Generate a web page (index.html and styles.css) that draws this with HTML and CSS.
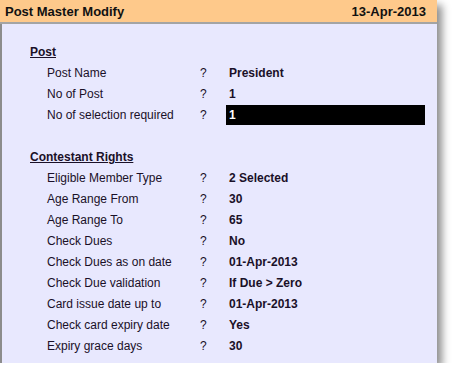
FILE: index.html
```html
<!DOCTYPE html>
<html lang="en">
<head>
  <meta charset="UTF-8">
  <title>Post Master Modify</title>
  <link rel="stylesheet" href="styles.css">
</head>
<body>
  <div class="panel">
    <div class="titlebar">
      <span>Post Master Modify</span>
      <span>13-Apr-2013</span>
    </div>
    <div class="content">
      <div class="heading">Post</div>
      <div class="row"><span class="label">Post Name</span><span class="q">?</span><span class="value">President</span></div>
      <div class="row"><span class="label">No of Post</span><span class="q">?</span><span class="value">1</span></div>
      <div class="row"><span class="label">No of selection required</span><span class="q">?</span><span class="value active">1</span></div>
      <div class="gap"></div>
      <div class="heading">Contestant Rights</div>
      <div class="row"><span class="label">Eligible Member Type</span><span class="q">?</span><span class="value">2 Selected</span></div>
      <div class="row"><span class="label">Age Range From</span><span class="q">?</span><span class="value">30</span></div>
      <div class="row"><span class="label">Age Range To</span><span class="q">?</span><span class="value">65</span></div>
      <div class="row"><span class="label">Check Dues</span><span class="q">?</span><span class="value">No</span></div>
      <div class="row"><span class="label">Check Dues as on date</span><span class="q">?</span><span class="value">01-Apr-2013</span></div>
      <div class="row"><span class="label">Check Due validation</span><span class="q">?</span><span class="value">If Due &gt; Zero</span></div>
      <div class="row"><span class="label">Card issue date up to</span><span class="q">?</span><span class="value">01-Apr-2013</span></div>
      <div class="row"><span class="label">Check card expiry date</span><span class="q">?</span><span class="value">Yes</span></div>
      <div class="row"><span class="label">Expiry grace days</span><span class="q">?</span><span class="value">30</span></div>
    </div>
  </div>
</body>
</html>
```
FILE: styles.css
```css
body {
  margin: 0;
  background-color: #fff;
  font-family: "Liberation Sans", Arial, sans-serif;
  font-size: 12px;
  color: #1a1028;
}
.panel {
  width: 437px;
  height: 363px;
  background-color: #e8e8fe;
  box-shadow: 5px 5px 8px rgba(0, 0, 0, 0.45);
  display: flex;
  flex-direction: column;
}
.titlebar {
  height: 22px;
  background-color: #fec98b;
  border-bottom: 2px solid #a4a4a4;
  display: flex;
  justify-content: space-between;
  align-items: center;
  padding: 0 11px 0 5px;
  font-size: 13px;
  font-weight: bold;
  color: #111;
}
.content {
  flex: 1;
  border-left: 2px solid #8c8c8c;
  padding: 18px 0 0 28px;
}
.heading {
  height: 21px;
  line-height: 21px;
  font-weight: bold;
  text-decoration: underline;
}
.row {
  display: flex;
  height: 21px;
  line-height: 21px;
}
.label {
  width: 153px;
  padding-left: 17px;
}
.q {
  width: 26px;
}
.value {
  padding-left: 3px;
  font-weight: bold;
}
.value.active {
  width: 196px;
  height: 20px;
  line-height: 20px;
  background-color: #000;
  color: #fff;
}
.gap {
  height: 21px;
}
```
